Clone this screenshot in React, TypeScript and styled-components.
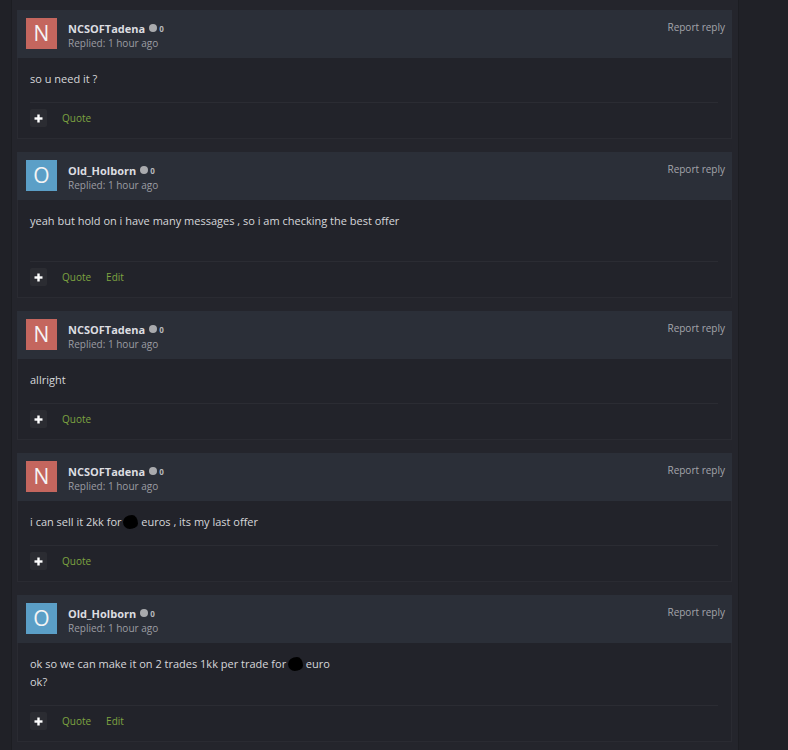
import * as React from "react";
import styled, { createGlobalStyle } from "styled-components";

const GlobalStyle = createGlobalStyle`
  html, body {
    margin: 0;
    padding: 0;
    background: #202127;
    font-family: "Open Sans", "Noto Sans", sans-serif;
  }
`;

const Page = styled.div`
  min-height: 750px;
  display: flex;
`;

const Column = styled.div`
  margin-left: 11px;
  width: 728px;
  min-height: 750px;
  background: #24252c;
  border-left: 1px solid #1c1d22;
  border-right: 1px solid #1c1d22;
  padding: 10px 6px 0 5px;
  box-sizing: border-box;
  display: flex;
  flex-direction: column;
  gap: 13px;
`;

const Card = styled.div`
  background: #22232a;
  border: 1px solid #2a2b32;
  border-top: none;
`;

const Header = styled.div`
  height: 48px;
  background: #2b2f38;
  display: flex;
  align-items: flex-start;
  padding: 8px 7px 0 8px;
  box-sizing: border-box;
  margin: 0 -1px;
`;

const Avatar = styled.div<{ $color: string }>`
  width: 31px;
  height: 31px;
  margin-left: 1px;
  background: ${(p) => p.$color};
  color: #f4f4f4;
  font-size: 21px;
  line-height: 31px;
  text-align: center;
  flex-shrink: 0;
`;

const Meta = styled.div`
  margin-left: 11px;
  flex: 1;
  padding-top: 1px;
`;

const NameRow = styled.div`
  display: flex;
  align-items: center;
  height: 18px;
`;

const Name = styled.span`
  color: #dcdde0;
  font-weight: 700;
  font-size: 11px;
`;

const Dot = styled.span`
  width: 8px;
  height: 8px;
  border-radius: 50%;
  background: #a9aaad;
  margin-left: 4px;
`;

const Rep = styled.span`
  color: #b8b9bc;
  font-weight: 700;
  font-size: 8px;
  margin-left: 2px;
`;

const Replied = styled.div`
  color: #9c9da3;
  font-size: 10px;
  line-height: 12px;
`;

const Report = styled.span`
  color: #a3a5ab;
  font-size: 10px;
  line-height: 18px;
`;

const Body = styled.div`
  padding: 12px 13px 0 12px;
  color: #d6d7da;
  font-size: 11px;
`;

const Line = styled.div<{ $blank?: boolean }>`
  line-height: 18px;
  height: ${(p) => (p.$blank ? "17px" : "auto")};
`;

const Footer = styled.div`
  margin: 14px 13px 0 12px;
  border-top: 1px solid #2b2c33;
  padding: 6px 0 11px 0;
  display: flex;
  align-items: center;
`;

const PlusButton = styled.div`
  width: 17px;
  height: 18px;
  border-radius: 2px;
  background: #2b2c32;
  color: #ffffff;
  display: flex;
  align-items: center;
  justify-content: center;
`;

const Action = styled.span`
  color: #7ea441;
  font-size: 10px;
  margin-left: 15px;
  & + & {
    margin-left: 15px;
  }
`;

const Blot = styled.span`
  display: inline-block;
  width: 15px;
  height: 14px;
  background: #000;
  border-radius: 60% 40% 55% 45% / 50% 60% 40% 50%;
  vertical-align: -3px;
  margin: 0 0 0 -1px;
`;

type Post = {
  name: string;
  color: string;
  lines: React.ReactNode[];
  edit?: boolean;
};

const PlusIcon = () => (
  <svg width="9" height="9" viewBox="0 0 9 9">
    <rect x="3.3" y="0.5" width="2.4" height="8" fill="#fff" />
    <rect x="0.5" y="3.3" width="8" height="2.4" fill="#fff" />
  </svg>
);

const posts: Post[] = [
  { name: "NCSOFTadena", color: "#c4665e", lines: ["so u need it ?"] },
  {
    name: "Old_Holborn",
    color: "#5b9fc7",
    lines: ["yeah but hold on i have many messages , so i am checking the best offer", ""],
    edit: true,
  },
  { name: "NCSOFTadena", color: "#c4665e", lines: ["allright"] },
  {
    name: "NCSOFTadena",
    color: "#c4665e",
    lines: [
      <>
        i can sell it 2kk for <Blot /> euros , its my last offer
      </>,
    ],
  },
  {
    name: "Old_Holborn",
    color: "#5b9fc7",
    lines: [
      <>
        ok so we can make it on 2 trades 1kk per trade for <Blot /> euro
      </>,
      "ok?",
    ],
    edit: true,
  },
];

export default function App() {
  return (
    <>
      <GlobalStyle />
      <Page>
        <Column>
          {posts.map((p, i) => (
            <Card key={i}>
              <Header>
                <Avatar $color={p.color}>{p.name[0]}</Avatar>
                <Meta>
                  <NameRow>
                    <Name>{p.name}</Name>
                    <Dot />
                    <Rep>0</Rep>
                  </NameRow>
                  <Replied>Replied: 1 hour ago</Replied>
                </Meta>
                <Report>Report reply</Report>
              </Header>
              <Body>
                {p.lines.map((l, j) => (
                  <Line key={j} $blank={l === ""}>
                    {l}
                  </Line>
                ))}
              </Body>
              <Footer>
                <PlusButton>
                  <PlusIcon />
                </PlusButton>
                <Action>Quote</Action>
                {p.edit && <Action>Edit</Action>}
              </Footer>
            </Card>
          ))}
        </Column>
      </Page>
    </>
  );
}
